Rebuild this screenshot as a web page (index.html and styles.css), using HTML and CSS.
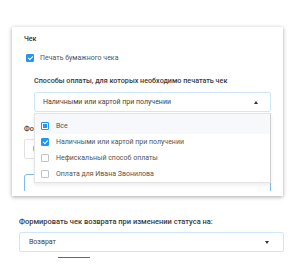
FILE: index.html
```html
<!DOCTYPE html>
<html lang="ru">
<head>
  <meta charset="UTF-8" />
  <title>Чек</title>
  <link rel="stylesheet" href="styles.css">
</head>
<body>
  <div class="card">
    <div class="card-body">
      <div class="label">Чек</div>
      <label class="check-row">
        <span class="box checked"></span>
        <span>Печать бумажного чека</span>
      </label>

      <div class="nested">
        <div class="label sub">Способы оплаты, для которых необходимо печатать чек</div>
        <div class="select-wrap">
          <div class="select open">
            <span>Наличными или картой при получении</span>
            <span class="arrow up"></span>
          </div>
          <ul class="dropdown">
            <li class="hover"><span class="box partial"></span>Все</li>
            <li><span class="box checked"></span>Наличными или картой при получении</li>
            <li><span class="box"></span>Нефискальный способ оплаты</li>
            <li><span class="box"></span>Оплата для Ивана Звонилова</li>
          </ul>
        </div>
      </div>

      <div class="label sub">Фо</div>
      <div class="select plain"><span>Н</span></div>
      <div class="select focus"></div>
    </div>
  </div>

  <div class="section">
    <div class="label sub">Формировать чек возврата при изменении статуса на:</div>
    <div class="select">
      <span>Возврат</span>
      <span class="arrow down"></span>
    </div>
    <div class="tab-line"></div>
  </div>
</body>
</html>
```

FILE: styles.css
```css
body {
  margin: 0;
  padding-top: 27px;
  background: #fff;
  font-family: Roboto, "Liberation Sans", sans-serif;
  font-size: 7px;
  color: #555;
}

.card {
  margin: 0 17px 0 12px;
  padding-bottom: 5px;
  background: #fff;
  box-shadow: 0 1px 4px rgba(0,0,0,0.35);
}

.card-body {
  height: 158px;
  overflow: hidden;
  padding: 6px 12px 0;
}

.label {
  line-height: 12px;
  color: #333;
  font-weight: 500;
}

.label.sub {
  color: #3a3a3a;
  font-size: 7.2px;
}

.check-row {
  display: flex;
  align-items: center;
  gap: 6px;
  margin-top: 7px;
  padding-left: 2px;
  line-height: 12px;
}

.box {
  width: 8px;
  height: 8px;
  box-sizing: border-box;
  border: 1px solid #c4c4c4;
  border-radius: 1px;
  background: #fff;
  flex: none;
  position: relative;
}

.box.checked {
  background: #2196f3;
  border-color: #2196f3;
}

.box.checked::after {
  content: "";
  position: absolute;
  left: 2px;
  top: 0;
  width: 2px;
  height: 4px;
  border: solid #fff;
  border-width: 0 1.2px 1.2px 0;
  transform: rotate(45deg);
}

.box.partial {
  border-color: #2196f3;
}

.box.partial::after {
  content: "";
  position: absolute;
  left: 1px;
  top: 1px;
  width: 4px;
  height: 4px;
  background: #2196f3;
}

.nested {
  padding-left: 10px;
  margin-top: 11px;
}

.select-wrap {
  position: relative;
}

.select {
  display: flex;
  align-items: center;
  justify-content: space-between;
  height: 20px;
  box-sizing: border-box;
  margin-top: 5px;
  padding: 0 12px 0 8px;
  border: 1px solid #cfe6f9;
  border-radius: 2px;
  color: #444;
}

.select.plain {
  border-color: #e2e2e2;
  margin-top: 4px;
  padding-left: 8px;
}

.select.focus {
  margin-top: 15px;
  border-color: #7fbdf0;
  border-radius: 3px;
}

.arrow {
  width: 0;
  height: 0;
  border-left: 2.5px solid transparent;
  border-right: 2.5px solid transparent;
}

.arrow.up {
  border-bottom: 3px solid #333;
}

.arrow.down {
  border-top: 3px solid #333;
}

.dropdown {
  position: absolute;
  top: 21px;
  left: 0;
  right: 0;
  margin: 0;
  padding: 0;
  list-style: none;
  background: #fff;
  border: 1px solid #e4e4e4;
  border-right-color: #d0d0d0;
  box-shadow: 0 2px 4px rgba(0,0,0,0.08);
  z-index: 2;
}

.dropdown li {
  display: flex;
  align-items: center;
  gap: 7px;
  height: 16px;
  padding-left: 6px;
  color: #555;
}

.dropdown li.hover {
  height: 20px;
  padding-top: 3px;
  box-sizing: border-box;
  background: #f6f8fb;
}

.card-body > .label.sub {
  margin-top: 11px;
}

.section {
  padding: 20px 16px 0 19px;
}

.section .label.sub {
  font-size: 7.5px;
}

.section .select {
  margin-top: 4px;
  padding: 0 14px 0 9px;
  border-color: #cfe6f9;
}

.tab-line {
  width: 32px;
  margin: 5px 0 0 39px;
  border-top: 1px solid #666;
}
```
